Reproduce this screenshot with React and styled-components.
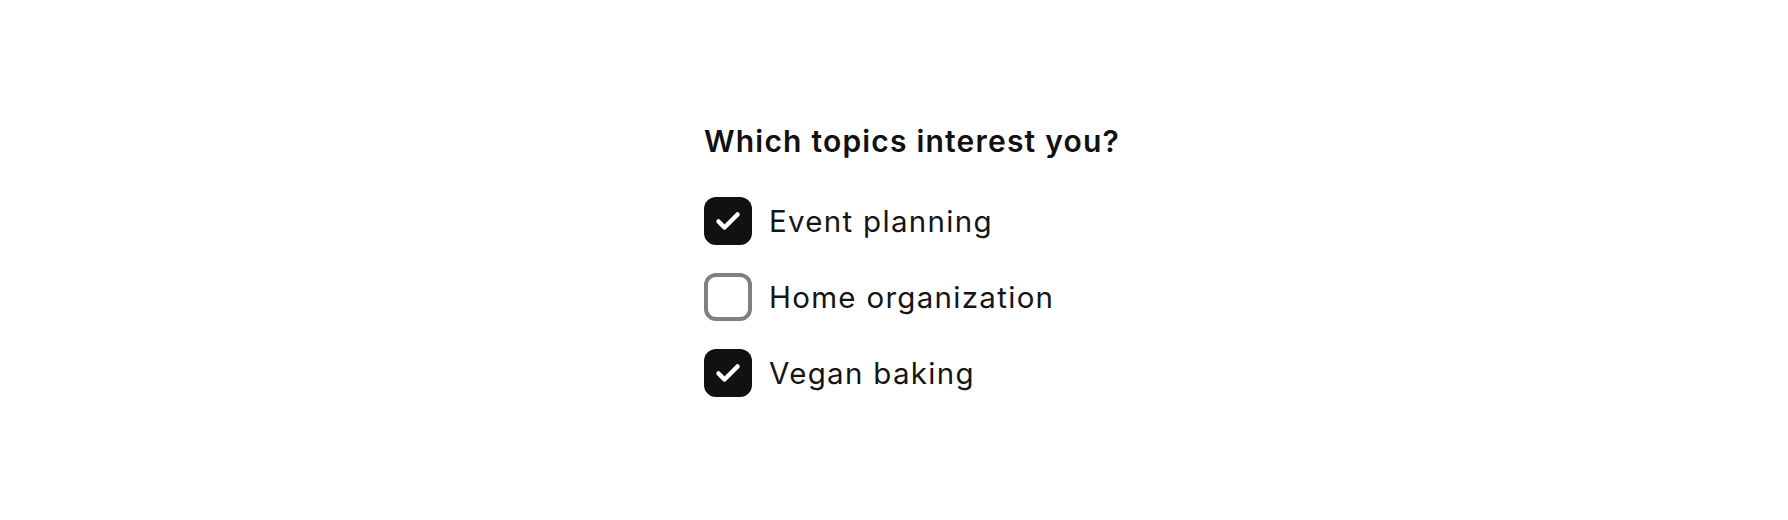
import React, { useState } from "react";
import styled, { createGlobalStyle } from "styled-components";

const Global = createGlobalStyle`
    body {
        margin: 0;
        background: #fff;
        font-family: Inter, "Noto Sans", sans-serif;
    }
`

const Page = styled.div`
    width: 1788px;
    height: 520px;
    padding: 123px 0 0 704px;
    box-sizing: border-box;
`

const Fieldset = styled.fieldset`
    border: 0;
    margin: 0;
    padding: 0;
    display: flex;
    flex-direction: column;
    gap: 28px;
`

const Legend = styled.legend`
    padding: 0;
    margin-bottom: 38px;
    font-size: 30px;
    font-weight: 600;
    letter-spacing: 1.2px;
    color: #111;
    white-space: nowrap;
`

const Option = styled.label`
    display: flex;
    align-items: center;
    gap: 17px;
    cursor: pointer;
    font-size: 29.5px;
    letter-spacing: 1.3px;
    color: #151515;
`

const Box = styled.span`
    width: 48px;
    height: 48px;
    box-sizing: border-box;
    border-radius: 12px;
    flex: none;
    display: flex;
    align-items: center;
    justify-content: center;
    background: ${p => (p.checked ? "#111" : "#fff")};
    border: ${p => (p.checked ? "none" : "4px solid #808080")};
`

const Hidden = styled.input`
    position: absolute;
    opacity: 0;
    width: 0;
    height: 0;
`

const Check = () => (
    <svg width="48" height="48" viewBox="0 0 48 48">
        <path d="M14.5 24.5 L20.5 30.5 L33.5 17.5" fill="none" stroke="#fff" strokeWidth="4.5" strokeLinecap="round" strokeLinejoin="round" />
    </svg>
)

const topics = [
    { name: "Event planning", on: true },
    { name: "Home organization", on: false },
    { name: "Vegan baking", on: true },
]

export default function App() {
    const [state, setState] = useState(topics.map(t => t.on))

    return (
        <Page>
            <Global />
            <Fieldset>
                <Legend>Which topics interest you?</Legend>
                {topics.map((t, i) => (
                    <Option key={t.name}>
                        <Hidden
                            type="checkbox"
                            checked={state[i]}
                            onChange={() => setState(s => s.map((v, j) => (j === i ? !v : v)))}
                        />
                        <Box checked={state[i]}>{state[i] && <Check />}</Box>
                        {t.name}
                    </Option>
                ))}
            </Fieldset>
        </Page>
    )
}
